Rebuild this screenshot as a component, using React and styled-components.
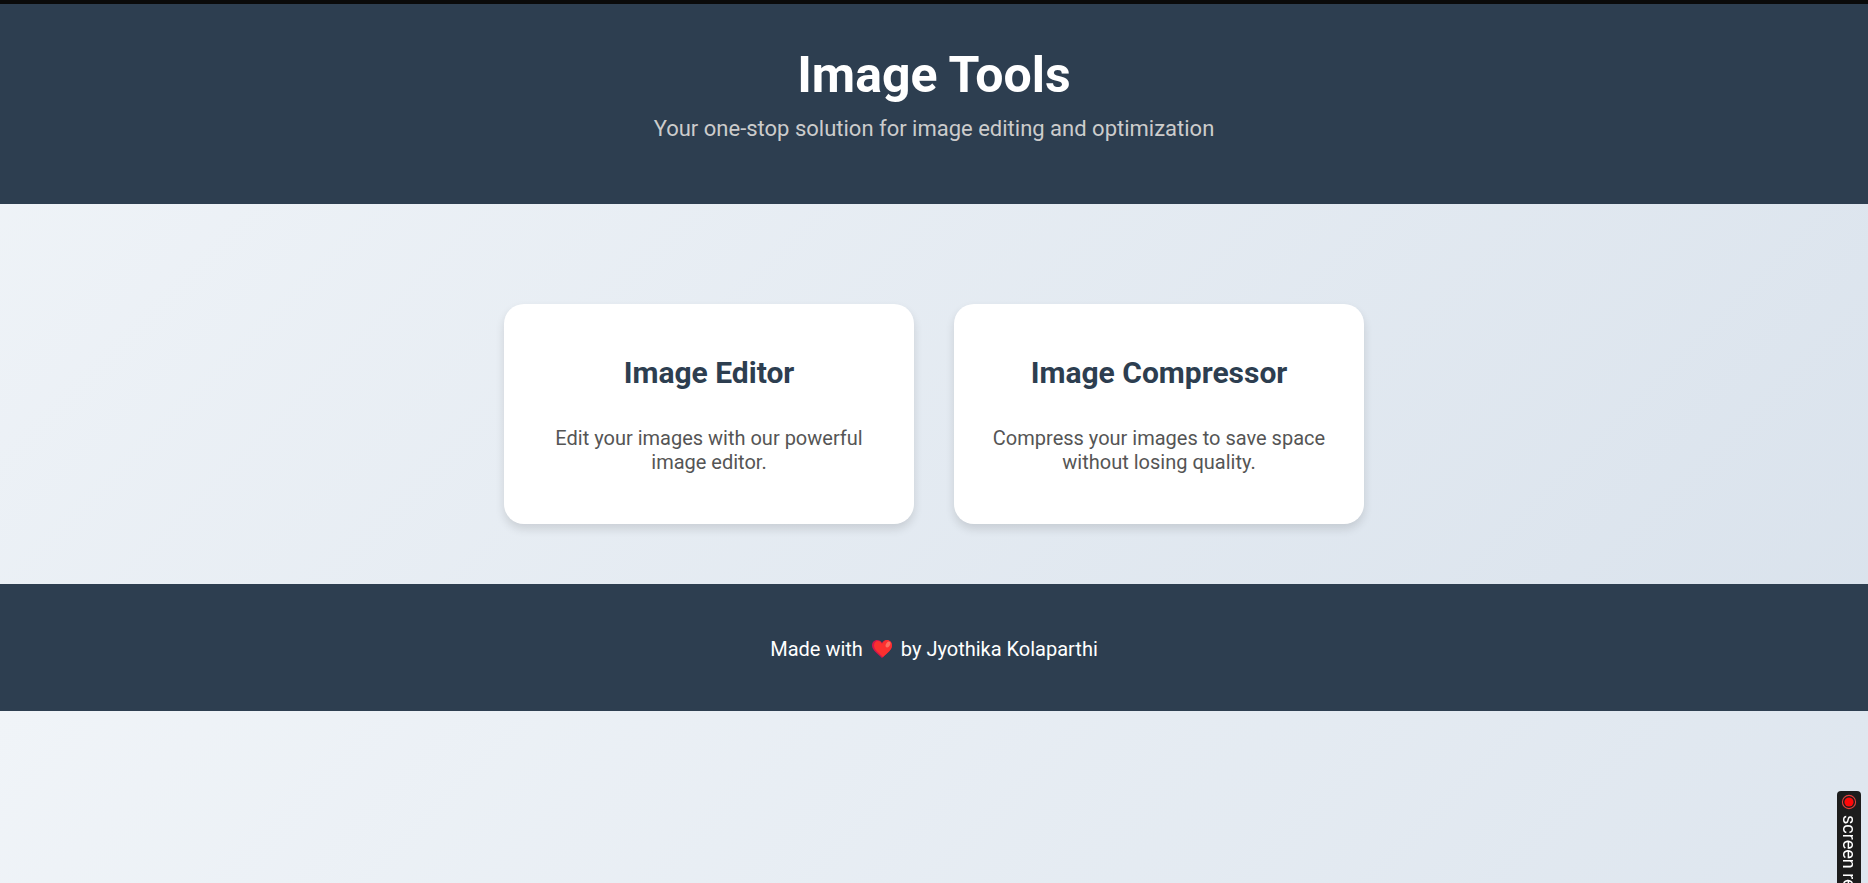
import React from "react";
import styled, { createGlobalStyle } from "styled-components";

const GlobalStyle = createGlobalStyle`
  *, *::before, *::after { box-sizing: border-box; }
  body {
    margin: 0;
    font-family: Roboto, "Liberation Sans", sans-serif;
    background: linear-gradient(135deg, #f0f4f8, #d9e2ec);
  }
`;

const TopStrip = styled.div`
  height: 4px;
  background: #0a0a0a;
`;

const Header = styled.header`
  padding: 41px 20px 61px;
  background: #2d3e50;
  text-align: center;
`;

const Title = styled.h1`
  margin: 0 0 10px;
  color: #fff;
  font-size: 50px;
  line-height: 60px;
  font-weight: 700;
`;

const Subtitle = styled.p`
  margin: 0;
  color: #ccc;
  font-size: 22px;
  line-height: 28px;
`;

const Tools = styled.main`
  display: flex;
  flex-wrap: wrap;
  justify-content: center;
  gap: 40px;
  padding: 100px 20px 60px;
`;

const Card = styled.a`
  width: 410px;
  max-width: 100%;
  padding: 50px 30px;
  border-radius: 20px;
  background: #fff;
  box-shadow: 0 5px 10px rgba(0, 0, 0, 0.12);
  text-align: center;
  text-decoration: none;
`;

const CardTitle = styled.h2`
  margin: 0 0 34px;
  color: #2d3e50;
  font-size: 30px;
  line-height: 38px;
  font-weight: 700;
`;

const CardText = styled.p`
  margin: 0;
  color: #555;
  font-size: 20px;
  line-height: 24px;
`;

const Footer = styled.footer`
  display: flex;
  justify-content: center;
  align-items: center;
  gap: 8px;
  padding: 53px 20px 50px;
  background: #2d3e50;
  color: #fff;
  font-size: 20px;
  line-height: 24px;
`;

const HeartIcon = styled.svg`
  width: 22px;
  height: 20px;
`;

const Recorder = styled.aside`
  position: fixed;
  top: 791px;
  right: 7px;
  display: flex;
  align-items: center;
  gap: 5px;
  height: 180px;
  padding: 3px 0;
  border-radius: 4px;
  background: #1c1c1c;
  color: #fff;
  writing-mode: vertical-rl;
  font-size: 18px;
  line-height: 24px;
  white-space: nowrap;
`;

const RecordIcon = styled.svg`
  width: 16px;
  height: 16px;
`;

const tools = [
  {
    name: "Image Editor",
    text: "Edit your images with our powerful image editor.",
    href: "#editor",
  },
  {
    name: "Image Compressor",
    text: "Compress your images to save space without losing quality.",
    href: "#compressor",
  },
];

export default function App() {
  return (
    <>
      <GlobalStyle />
      <TopStrip />
      <Header>
        <Title>Image Tools</Title>
        <Subtitle>Your one-stop solution for image editing and optimization</Subtitle>
      </Header>
      <Tools>
        {tools.map((tool) => (
          <Card key={tool.name} href={tool.href}>
            <CardTitle>{tool.name}</CardTitle>
            <CardText>{tool.text}</CardText>
          </Card>
        ))}
      </Tools>
      <Footer>
        <span>Made with</span>
        <HeartIcon viewBox="0 0 22 20" role="img" aria-label="love">
          <path
            d="M11 19C7 15 1 11 1 6.5C1 3.3 3.3 1 6 1C8.2 1 10 2.2 11 4C12 2.2 13.8 1 16 1C18.7 1 21 3.3 21 6.5C21 11 15 15 11 19Z"
            fill="#d5164b"
          />
          <path
            d="M12 18C8 14 3 11 3 6.5C3 3.8 4.8 2 7 2C9.2 2 10.4 3.5 11 5C12 2.7 13.8 1 16 1C18.7 1 21 3.3 21 6.5C21 11 16 14 12 18Z"
            fill="#fb302f"
          />
          <ellipse cx="17" cy="5.5" rx="2" ry="3.2" transform="rotate(30 17 5.5)" fill="#fb6f60" />
        </HeartIcon>
        <span>by Jyothika Kolaparthi</span>
      </Footer>
      <Recorder>
        <RecordIcon viewBox="0 0 16 16" aria-hidden="true">
          <circle cx="8" cy="8" r="6.6" fill="none" stroke="#e0403c" strokeWidth="1.1" />
          <circle cx="8" cy="8" r="4.6" fill="#ff0808" />
        </RecordIcon>
        <span>screen recorder</span>
      </Recorder>
    </>
  );
}
